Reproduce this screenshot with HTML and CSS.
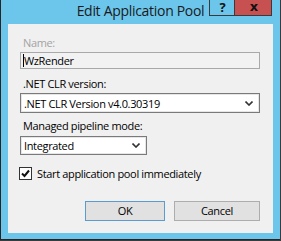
FILE: index.html
```html
<!DOCTYPE html>
<html>
<head>
<meta charset="utf-8">
<link rel="stylesheet" href="styles.css">
</head>
<body>
<div class="window">
  <div class="titlebar">
    <div class="title">Edit Application Pool</div>
    <div class="caption-buttons">
      <div class="cap-help">?</div>
      <div class="cap-x">x</div>
    </div>
  </div>
  <div class="content">
    <div class="label label-disabled label-name">Name:</div>
    <div class="textbox"><span class="caret"></span>WzRender</div>
    <div class="label label-clr">.NET CLR version:</div>
    <div class="select select-clr">
      <span>.NET CLR Version v4.0.30319</span>
      <svg class="chev" width="8" height="5" viewBox="0 0 8 5"><path d="M0.5 0.5 L4 4 L7.5 0.5" stroke="#333" stroke-width="1.6" fill="none"/></svg>
    </div>
    <div class="label label-mode">Managed pipeline mode:</div>
    <div class="select select-mode">
      <span>Integrated</span>
      <svg class="chev" width="8" height="5" viewBox="0 0 8 5"><path d="M0.5 0.5 L4 4 L7.5 0.5" stroke="#333" stroke-width="1.6" fill="none"/></svg>
    </div>
    <div class="check-row">
      <div class="checkbox">
        <svg width="11" height="11" viewBox="0 0 11 11"><path d="M2 5.5 L4.5 8 L9 2.5" stroke="#111" stroke-width="2" fill="none"/></svg>
      </div>
      <span>Start application pool immediately</span>
    </div>
    <div class="button-row">
      <div class="btn btn-default">OK</div>
      <div class="btn">Cancel</div>
    </div>
  </div>
</div>
</body>
</html>
```
FILE: styles.css
```css
html, body {
  margin: 0;
  padding: 0;
  background: #3b3b3b;
}
body {
  width: 281px;
  height: 241px;
  overflow: hidden;
  font-family: "Open Sans", "Noto Sans", sans-serif;
  font-size: 11px;
  letter-spacing: -0.35px;
  color: #000;
}
.window {
  width: 265px;
  height: 233px;
  background: #6cc6ec;
  border-left: 1px solid #262626;
  border-bottom: 1px solid #262626;
  padding: 0 7px 6px 7px;
}
.titlebar {
  height: 24px;
  display: grid;
  grid-template-columns: 208px 63px;
  margin: 0 -7px;
}
.title {
  text-align: center;
  padding-left: 71px;
  font-size: 14px;
  letter-spacing: -0.3px;
  color: #1a1a1a;
  line-height: 20px;
  padding-top: 1px;
  white-space: nowrap;
}
.caption-buttons {
  display: grid;
  grid-template-columns: 25px 38px;
  height: 16px;
  box-sizing: border-box;
  border: 1px solid #3a3a3a;
  border-top: 0;
  background: linear-gradient(to right, #6cc6ec 0, #6cc6ec 24px, #3a3a3a 24px, #3a3a3a 25px, #c75050 25px);
  color: #111;
  font-weight: bold;
  letter-spacing: 0;
  text-align: center;
}
.cap-help {
  font-size: 13px;
  line-height: 15px;
}
.cap-x {
  font-size: 13px;
  line-height: 13px;
  font-family: "DejaVu Sans", sans-serif;
}
.content {
  background: #f0f0f0;
  height: 209px;
  padding: 0 13px 0 12px;
  box-sizing: border-box;
}
.label {
  line-height: 15px;
  height: 15px;
  padding-left: 3px;
  color: #000;
}
.label-disabled { color: #a3a3a3; }
.label-name { padding-top: 11px; }
.textbox {
  margin-top: 2px;
  height: 15px;
  border: 1px solid #a9a9a9;
  background: #f2f2f2;
  line-height: 15px;
  padding-left: 2px;
  display: flex;
  align-items: center;
}
.caret {
  width: 1px;
  height: 13px;
  background: #000;
}
.label-clr { margin-top: 7px; }
.select {
  height: 18px;
  border: 1px solid #7a7a7a;
  background: #fff;
  display: flex;
  align-items: center;
  justify-content: space-between;
  padding: 0 6px 0 3px;
  box-shadow: inset 0 0 0 1px #e6e6e6;
}
.select-clr { margin-top: 2px; }
.label-mode { margin-top: 5px; }
.select-mode {
  margin-top: 3px;
  height: 17px;
  width: 116px;
}
.chev { display: block; }
.check-row {
  margin-top: 12px;
  margin-left: -1px;
  display: flex;
  align-items: center;
  height: 13px;
  gap: 5px;
}
.checkbox {
  width: 11px;
  height: 11px;
  border: 1px solid #333;
  background: #fff;
  display: flex;
  align-items: center;
  justify-content: center;
}
.button-row {
  margin-top: 21px;
  display: flex;
  justify-content: flex-end;
  gap: 9px;
}
.btn {
  width: 84px;
  height: 18px;
  border: 1px solid #adadad;
  background: #e1e1e1;
  display: flex;
  align-items: center;
  justify-content: center;
  line-height: 18px;
}
.btn-default {
  width: 78px;
  border-color: #5b9bd0;
}
```
